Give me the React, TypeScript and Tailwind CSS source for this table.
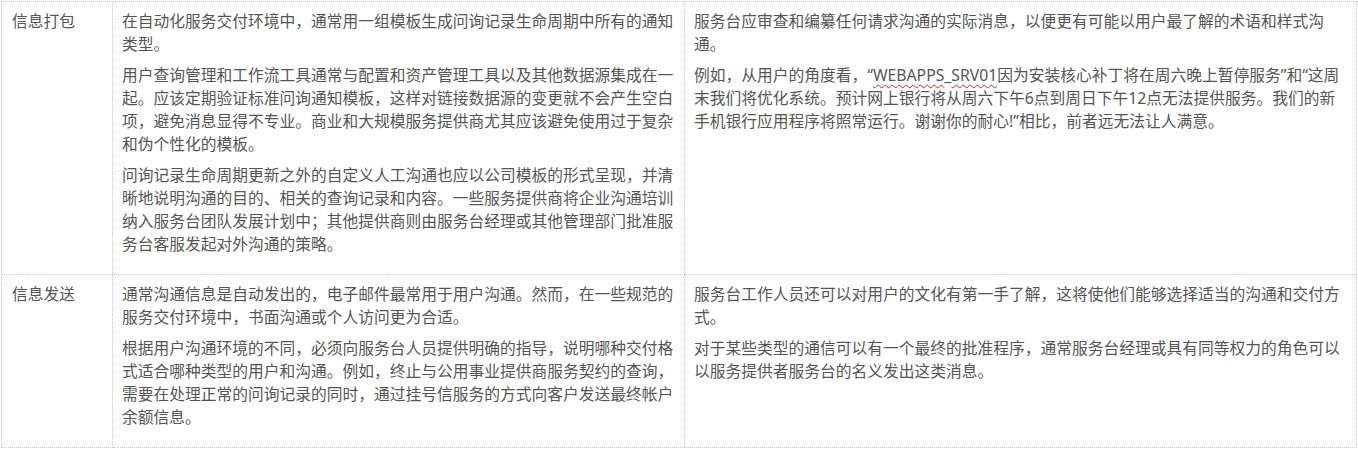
import React from "react";

const cell = "border-r border-b border-dotted border-[#c8c8c8] pt-2 pb-[10px] align-top";
const P = ({ children }: { children: React.ReactNode }) => <p className="mb-2">{children}</p>;

export default function App() {
  return (
    <div
      className="bg-white min-h-[450px] w-[1358px] pl-[1px] pt-[1px] text-[#555555] text-[15.75px] leading-[23px]"
      style={{ fontFamily: '"Noto Sans", "Noto Sans CJK SC", sans-serif' }}
    >
      <div className="grid grid-cols-[111px_572px_672px] border-l border-t border-dotted border-[#c8c8c8]">
        <div className={`${cell} pl-[10px] pr-[9px]`}>信息打包</div>
        <div className={`${cell} pl-[9px] pr-[10px]`}>
          <P>在自动化服务交付环境中，通常用一组模板生成问询记录生命周期中所有的通知类型。</P>
          <P>用户查询管理和工作流工具通常与配置和资产管理工具以及其他数据源集成在一起。应该定期验证标准问询通知模板，这样对链接数据源的变更就不会产生空白项，避免消息显得不专业。商业和大规模服务提供商尤其应该避免使用过于复杂和伪个性化的模板。</P>
          <P>问询记录生命周期更新之外的自定义人工沟通也应以公司模板的形式呈现，并清晰地说明沟通的目的、相关的查询记录和内容。一些服务提供商将企业沟通培训纳入服务台团队发展计划中；其他提供商则由服务台经理或其他管理部门批准服务台客服发起对外沟通的策略。</P>
        </div>
        <div className={`${cell} pl-[9px] pr-[10px]`}>
          <P>服务台应审查和编纂任何请求沟通的实际消息，以便更有可能以用户最了解的术语和样式沟通。</P>
          <P>
            例如，从用户的角度看，“
            <span className="underline decoration-wavy decoration-[#e02020] decoration-1 underline-offset-[3px]">WEBAPPS</span>_
            <span className="underline decoration-wavy decoration-[#e02020] decoration-1 underline-offset-[3px]">SRV01</span>
            因为安装核心补丁将在周六晚上暂停服务”和“这周末我们将优化系统。预计网上银行将从周六下午6点到周日下午12点无法提供服务。我们的新手机银行应用程序将照常运行。谢谢你的耐心!”相比，前者远无法让人满意。
          </P>
        </div>

        <div className={`${cell} pl-[10px] pr-[9px]`}>信息发送</div>
        <div className={`${cell} pl-[9px] pr-[10px]`}>
          <P>通常沟通信息是自动发出的，电子邮件最常用于用户沟通。然而，在一些规范的服务交付环境中，书面沟通或个人访问更为合适。</P>
          <P>根据用户沟通环境的不同，必须向服务台人员提供明确的指导，说明哪种交付格式适合哪种类型的用户和沟通。例如，终止与公用事业提供商服务契约的查询，需要在处理正常的问询记录的同时，通过挂号信服务的方式向客户发送最终帐户余额信息。</P>
        </div>
        <div className={`${cell} pl-[9px] pr-[10px]`}>
          <P>服务台工作人员还可以对用户的文化有第一手了解，这将使他们能够选择适当的沟通和交付方式。</P>
          <P>对于某些类型的通信可以有一个最终的批准程序，通常服务台经理或具有同等权力的角色可以以服务提供者服务台的名义发出这类消息。</P>
        </div>
      </div>
    </div>
  );
}
